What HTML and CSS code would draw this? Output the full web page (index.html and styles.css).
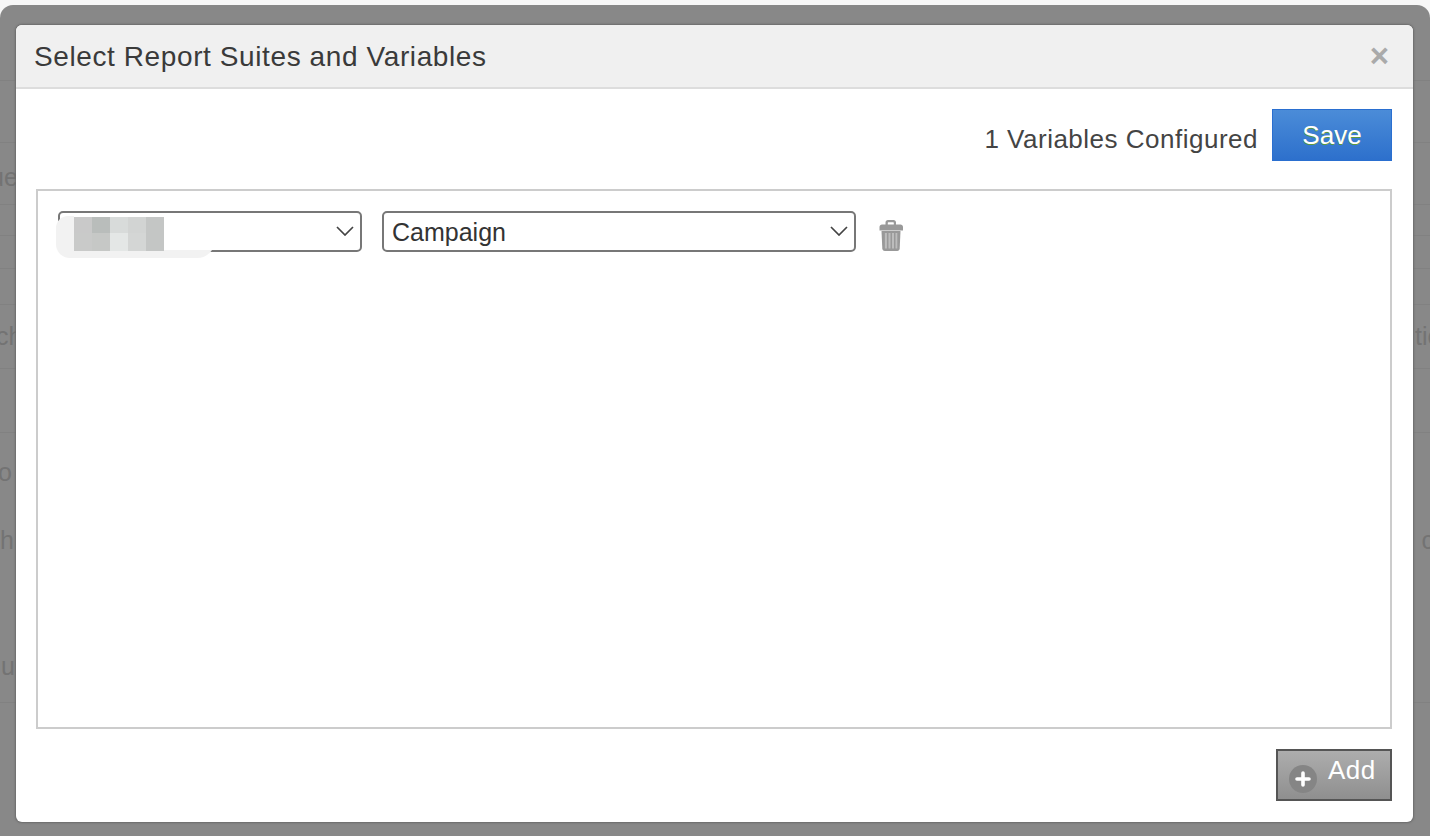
FILE: index.html
```html
<!DOCTYPE html>
<html lang="en">
<head>
<meta charset="utf-8">
<title>Select Report Suites and Variables</title>
<link rel="stylesheet" href="styles.css">
</head>
<body>
<div class="backdrop">
  <div class="bg-rows">
    <div class="bg-row h62"></div>
    <div class="bg-row h62"></div>
    <div class="bg-row h62"><span class="frag left-ue">ue</span></div>
    <div class="bg-row h31"></div>
    <div class="bg-row h33"></div>
    <div class="bg-row h36"></div>
    <div class="bg-row h64"><span class="frag left-ch">ch</span><span class="frag right-ti">tic</span></div>
    <div class="bg-row h64"></div>
    <div class="bg-row h64 no-line"><span class="frag left-o">o</span></div>
    <div class="bg-row h64 no-line"><span class="frag left-h">h</span><span class="frag right-c">c</span></div>
    <div class="bg-row h142"><span class="frag left-u">u</span></div>
  </div>

  <section class="modal">
    <header class="modal-head">
      <h1 class="modal-title">Select Report Suites and Variables</h1>
      <span class="modal-close">×</span>
    </header>
    <div class="modal-body">
      <div class="toolbar">
        <span class="count">1 Variables Configured</span>
        <button class="btn-save" type="button">Save</button>
      </div>
      <div class="panel">
        <div class="row">
          <div class="select-wrap suite">
            <select class="select" aria-label="Report suite"><option></option></select>
            <svg class="chev" viewBox="0 0 18 10" aria-hidden="true"><path d="M1 1l8 8 8-8"/></svg>
            <div class="redact">
              <div class="mosaic">
                <i class="c1"></i><i class="c2"></i><i class="c3"></i><i class="c4"></i><i class="c5"></i>
                <i class="c6"></i><i class="c7"></i><i class="c8"></i><i class="c9"></i><i class="c5"></i>
              </div>
            </div>
          </div>
          <div class="select-wrap variable">
            <select class="select" aria-label="Variable"><option>Campaign</option></select>
            <svg class="chev" viewBox="0 0 18 10" aria-hidden="true"><path d="M1 1l8 8 8-8"/></svg>
          </div>
          <svg class="trash" viewBox="0 0 24 31" aria-label="Delete">
            <path class="trash-fill" d="M6.500 4.500V2.500C6.500 1 7.500 0 9 0h5.500C16 0 17 1 17 2.500v2h4.500c1.300 0 2.500 1 2.500 2.500v3.500H0.500V7c0-1.500 1.200-2.500 2.500-2.500zM8.800 4.500h6V2.800c0-.4-.2-.6-.6-.6H9.400c-.4 0-.6.2-.6.6z"/>
            <path class="trash-fill" d="M2.500 11h19l-.8 17.500c-.1 1.500-1 2.500-2.500 2.500H5.800c-1.500 0-2.400-1-2.500-2.500z"/>
            <path class="trash-gap" d="M5.900 13h2v15.500h-2zM9.500 13h2v15.500h-2zM13 13h2v15.500h-2zM16.500 13h1.800v15.500h-1.800z"/>
          </svg>
        </div>
      </div>
      <div class="footer">
        <button class="btn-add" type="button">
          <svg class="plus" viewBox="0 0 28 28" aria-hidden="true">
            <circle cx="14" cy="14" r="14" fill="#858585"/>
            <path d="M14 8v12M8 14h12" stroke="#fff" stroke-width="3.600" stroke-linecap="round"/>
          </svg>
          <span class="add-label">Add</span>
        </button>
      </div>
    </div>
  </section>
</div>
</body>
</html>
```

FILE: styles.css
```css
* { box-sizing: border-box; }
html, body { margin: 0; height: 100%; }
body {
  background: #f7f7f7;
  padding-top: 5px;
  overflow: hidden;
  font-family: "Liberation Sans", Arial, sans-serif;
}
.backdrop {
  position: relative;
  height: 831px;
  background: #888;
  border-radius: 13px 13px 0 0;
  overflow: hidden;
}
.bg-rows { display: flex; flex-direction: column; padding-top: 14px; }
.bg-row {
  position: relative;
  display: flex;
  justify-content: space-between;
  border-bottom: 1px solid #818181;
  flex: none;
}
.bg-row.no-line { border-bottom: none; }
.h31 { height: 31px; }
.h33 { height: 33px; }
.h36 { height: 36px; }
.h62 { height: 62px; }
.h64 { height: 64px; }
.h142 { height: 142px; }
.frag {
  position: absolute;
  font-size: 25px;
  line-height: 30px;
  color: #737373;
}
.left-ue { left: -10px; top: 19px; }
.left-ch { left: -4px; top: 16px; }
.right-ti { right: -10px; top: 16px; }
.left-o { left: -2px; top: 24px; }
.left-h { left: 0; top: 28px; }
.right-c { right: -4px; top: 28px; }
.left-u { left: 1px; top: 90px; }

.modal {
  position: absolute;
  left: 16px;
  top: 20px;
  width: 1397px;
  height: 797px;
  display: flex;
  flex-direction: column;
  background: #fff;
  border-radius: 6px;
  box-shadow: 0 0 2px 1px #6a6a6a;
  overflow: hidden;
}
.modal-head {
  flex: none;
  height: 64px;
  display: flex;
  align-items: center;
  justify-content: space-between;
  padding: 0 24px 0 18px;
  background: #f0f0f0;
  border-bottom: 2px solid #ddd;
}
.modal-title {
  margin: 0;
  padding-top: 2px;
  font-size: 28px;
  font-weight: 400;
  letter-spacing: 0.6px;
  color: #3a3a3a;
}
.modal-close {
  font-size: 33px;
  line-height: 30px;
  font-weight: 700;
  color: #aaa;
}
.modal-body {
  flex: 1;
  display: flex;
  flex-direction: column;
  padding: 20px 21px 21px 20px;
}
.toolbar {
  flex: none;
  display: flex;
  align-items: center;
  justify-content: flex-end;
  gap: 14px;
  margin-bottom: 28px;
}
.count {
  font-size: 26px;
  letter-spacing: 0.5px;
  color: #444;
  padding-top: 9px;
}
.btn-save {
  width: 120px;
  height: 52px;
  padding: 0;
  border: 1px solid #2a6fd0;
  background: linear-gradient(#4b8cd8, #2d70cc);
  color: #fff;
  font: 400 26px "Liberation Sans", Arial, sans-serif;
  text-shadow: 0 1px 0 #5d9a3c;
}
.panel {
  flex: 1;
  border: 2px solid #ccc;
  padding: 20px;
}
.row { display: flex; align-items: flex-start; gap: 20px; }
.select-wrap { position: relative; flex: none; height: 41px; }
.suite { width: 304px; }
.variable { width: 474px; }
.select {
  display: block;
  width: 100%;
  height: 100%;
  padding: 0 30px 0 8px;
  appearance: none;
  background: #fff;
  border: 2px solid #777;
  border-radius: 5px;
  color: #333;
  font: 400 25px "Liberation Sans", Arial, sans-serif;
}
.chev {
  position: absolute;
  right: 8px;
  top: 15px;
  width: 18px;
  height: 10px;
  fill: none;
  stroke: #444;
  stroke-width: 1.700;
}
.redact {
  position: absolute;
  left: -2px;
  top: 5px;
  width: 159px;
  height: 42px;
  padding: 0 0 8px 18px;
  background:
    linear-gradient(#fff 0, #fff 34px, transparent 34px) 18px 0 no-repeat,
    #f2f2f2;
  border-radius: 12px 0 18px 14px;
}
.mosaic {
  display: grid;
  grid-template-columns: repeat(5, 18px);
  grid-template-rows: 16px 18px;
  width: 90px;
  height: 34px;
  margin-top: 1px;
}
.mosaic i { display: block; }
.c1 { background: #c9c9c9; }
.c2 { background: #b9bdbb; }
.c3 { background: #d8dbda; }
.c4 { background: #d2d4d3; }
.c5 { background: #c4c6c5; }
.c6 { background: #c9cac9; }
.c7 { background: #c6c8c6; }
.c8 { background: #e4e7e6; }
.c9 { background: #d4d6d5; }
.trash {
  flex: none;
  width: 24px;
  height: 31px;
  margin: 9px 0 0 3px;
}
.trash-fill { fill: #999; fill-rule: evenodd; }
.trash-gap { fill: #bdbdbd; }
.footer {
  flex: none;
  display: flex;
  justify-content: flex-end;
  margin-top: 20px;
}
.btn-add {
  position: relative;
  width: 116px;
  height: 52px;
  padding: 0;
  border: 2px solid #555;
  background: linear-gradient(#adadad, #8f8f8f);
  color: #fff;
  font: 400 26px "Liberation Sans", Arial, sans-serif;
  letter-spacing: 0.5px;
}
.plus {
  position: absolute;
  left: 11px;
  top: 14px;
  width: 28px;
  height: 28px;
}
.add-label {
  position: absolute;
  left: 50px;
  top: 3px;
  line-height: 32px;
}
```
